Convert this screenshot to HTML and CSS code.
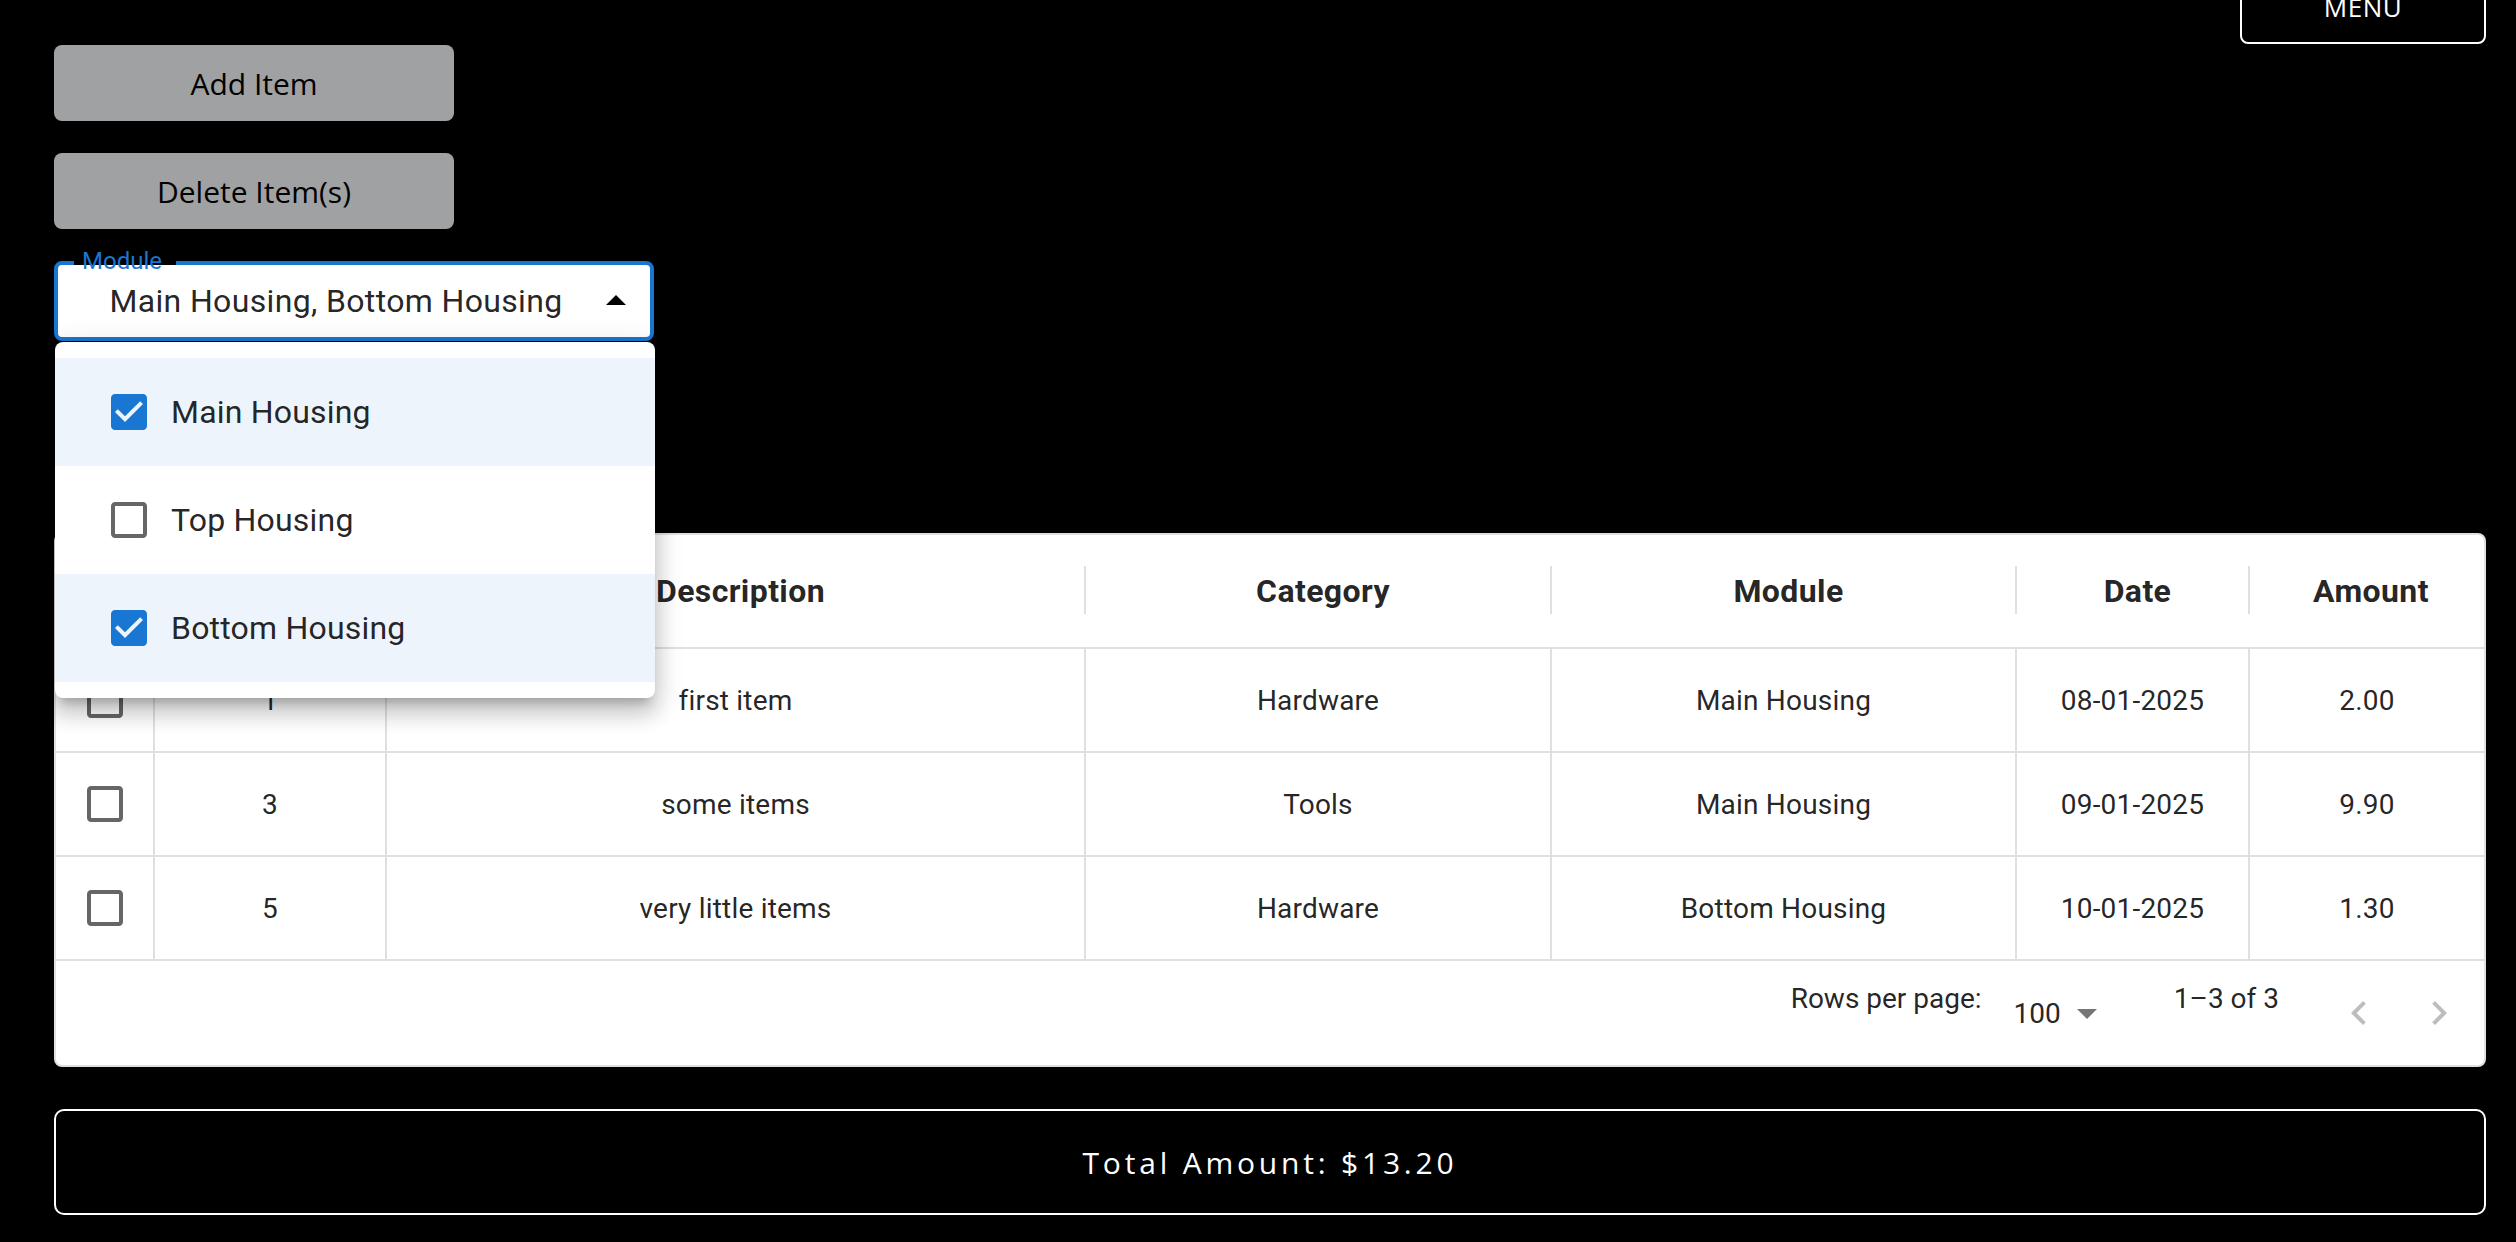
FILE: index.html
```html
<!DOCTYPE html>
<html lang="en">
<head>
<meta charset="utf-8">
<title>Items</title>
<link rel="stylesheet" href="styles.css">
</head>
<body>
<div class="page">
  <header class="topbar">
    <button class="menu-btn">MENU</button>
  </header>

  <div class="controls">
    <button class="btn">Add Item</button>
    <button class="btn">Delete Item(s)</button>

    <div class="select-wrap">
      <div class="select">
        <span class="select-value">Main Housing, Bottom Housing</span>
        <svg class="select-icon" viewBox="0 0 24 24"><path d="M7 14l5-5 5 5z"/></svg>
      </div>
      <span class="select-label">Module</span>

      <div class="menu">
        <div class="menu-item selected">
          <span class="cb"><svg class="checked" viewBox="0 0 24 24"><path d="M19 3H5c-1.11 0-2 .9-2 2v14c0 1.1.89 2 2 2h14c1.11 0 2-.9 2-2V5c0-1.1-.89-2-2-2zm-9 14l-5-5 1.41-1.41L10 14.17l7.59-7.59L19 8l-9 9z"/></svg></span>
          <span>Main Housing</span>
        </div>
        <div class="menu-item">
          <span class="cb"><svg class="unchecked" viewBox="0 0 24 24"><path d="M19 5v14H5V5h14m0-2H5c-1.1 0-2 .9-2 2v14c0 1.1.9 2 2 2h14c1.1 0 2-.9 2-2V5c0-1.1-.9-2-2-2z"/></svg></span>
          <span>Top Housing</span>
        </div>
        <div class="menu-item selected">
          <span class="cb"><svg class="checked" viewBox="0 0 24 24"><path d="M19 3H5c-1.11 0-2 .9-2 2v14c0 1.1.89 2 2 2h14c1.11 0 2-.9 2-2V5c0-1.1-.89-2-2-2zm-9 14l-5-5 1.41-1.41L10 14.17l7.59-7.59L19 8l-9 9z"/></svg></span>
          <span>Bottom Housing</span>
        </div>
      </div>
    </div>
  </div>

  <div class="grid">
    <div class="row head">
      <div class="hcell"><svg class="unchecked cbi" viewBox="0 0 24 24"><path d="M19 5v14H5V5h14m0-2H5c-1.1 0-2 .9-2 2v14c0 1.1.9 2 2 2h14c1.1 0 2-.9 2-2V5c0-1.1-.9-2-2-2z"/></svg></div>
      <div class="hcell">ID</div>
      <div class="hcell">Description</div>
      <div class="hcell">Category</div>
      <div class="hcell">Module</div>
      <div class="hcell">Date</div>
      <div class="hcell last">Amount</div>
    </div>

    <div class="row body-row">
      <div class="cell"><svg class="unchecked cbi" viewBox="0 0 24 24"><path d="M19 5v14H5V5h14m0-2H5c-1.1 0-2 .9-2 2v14c0 1.1.9 2 2 2h14c1.1 0 2-.9 2-2V5c0-1.1-.9-2-2-2z"/></svg></div>
      <div class="cell">1</div>
      <div class="cell">first item</div>
      <div class="cell">Hardware</div>
      <div class="cell">Main Housing</div>
      <div class="cell">08-01-2025</div>
      <div class="cell">2.00</div>
    </div>

    <div class="row body-row">
      <div class="cell"><svg class="unchecked cbi" viewBox="0 0 24 24"><path d="M19 5v14H5V5h14m0-2H5c-1.1 0-2 .9-2 2v14c0 1.1.9 2 2 2h14c1.1 0 2-.9 2-2V5c0-1.1-.9-2-2-2z"/></svg></div>
      <div class="cell">3</div>
      <div class="cell">some items</div>
      <div class="cell">Tools</div>
      <div class="cell">Main Housing</div>
      <div class="cell">09-01-2025</div>
      <div class="cell">9.90</div>
    </div>

    <div class="row body-row">
      <div class="cell"><svg class="unchecked cbi" viewBox="0 0 24 24"><path d="M19 5v14H5V5h14m0-2H5c-1.1 0-2 .9-2 2v14c0 1.1.9 2 2 2h14c1.1 0 2-.9 2-2V5c0-1.1-.9-2-2-2z"/></svg></div>
      <div class="cell">5</div>
      <div class="cell">very little items</div>
      <div class="cell">Hardware</div>
      <div class="cell">Bottom Housing</div>
      <div class="cell">10-01-2025</div>
      <div class="cell">1.30</div>
    </div>

    <div class="foot">
      <span class="lbl">Rows per page:</span>
      <span class="psel"><span>100</span><svg viewBox="0 0 24 24"><path d="M7 10l5 5 5-5z"/></svg></span>
      <span class="lbl">1–3 of 3</span>
      <span class="actions">
        <span class="ibtn"><svg viewBox="0 0 24 24"><path d="M15.41 7.41 14 6l-6 6 6 6 1.41-1.41L10.83 12z"/></svg></span>
        <span class="ibtn"><svg viewBox="0 0 24 24"><path d="M10 6 8.59 7.41 13.17 12l-4.58 4.59L10 18l6-6z"/></svg></span>
      </span>
    </div>
  </div>

  <div class="total">Total Amount: $13.20</div>
</div>
</body>
</html>
```

FILE: styles.css
```css
* { box-sizing: border-box; }

html, body {
  margin: 0;
  background: #000;
}

body {
  font-family: Roboto, "Liberation Sans", sans-serif;
  overflow: hidden;
}

.page {
  padding: 0 30px 0 54px;
}

.topbar {
  display: flex;
  justify-content: flex-end;
  margin-top: -30px;
  height: 74px;
}

.menu-btn {
  width: 246px;
  height: 74px;
  padding: 0;
  border: 2px solid #fff;
  border-radius: 8px;
  background: transparent;
  color: #fff;
  font-family: "Open Sans", sans-serif;
  font-size: 26px;
  letter-spacing: 0.5px;
}

.controls {
  display: flex;
  flex-direction: column;
  align-items: flex-start;
  gap: 32px;
  margin-top: 1px;
}

.btn {
  width: 400px;
  height: 76px;
  padding: 0;
  border: none;
  border-radius: 8px;
  background: #a0a1a3;
  color: #000;
  font-family: "Open Sans", sans-serif;
  font-size: 30px;
}

.select-wrap {
  position: relative;
  width: 600px;
  height: 80px;
}

.select {
  position: relative;
  height: 80px;
  border: 4px solid #1976d2;
  border-radius: 8px;
  background: #fff;
  display: flex;
  align-items: center;
  justify-content: center;
  padding: 0 60px 0 24px;
  font-size: 32px;
  letter-spacing: 0.35px;
  color: rgba(0, 0, 0, 0.87);
  white-space: nowrap;
}

.select-icon {
  position: absolute;
  right: 10px;
  top: 12px;
  width: 48px;
  height: 48px;
  fill: #000;
}

.select-label {
  position: absolute;
  left: 20px;
  top: -12px;
  padding: 0 14px 0 8px;
  font-size: 24px;
  line-height: 24px;
  color: #1976d2;
  z-index: 1;
}

.select-label::before {
  content: "";
  position: absolute;
  left: 0;
  right: 0;
  top: 12px;
  height: 4px;
  background: #000;
  z-index: -1;
}

.menu {
  position: absolute;
  top: 81px;
  left: 1px;
  width: 600px;
  padding: 16px 0;
  background: #fff;
  border-radius: 8px;
  z-index: 10;
  box-shadow: 0 10px 10px -6px rgba(0, 0, 0, 0.2),
              0 16px 20px 2px rgba(0, 0, 0, 0.14),
              0 6px 28px 4px rgba(0, 0, 0, 0.12);
}

.menu-item {
  height: 108px;
  display: flex;
  align-items: center;
  padding-left: 32px;
  font-size: 32px;
  letter-spacing: 0.2px;
  color: rgba(0, 0, 0, 0.87);
}

.menu-item.selected {
  background: rgba(25, 118, 210, 0.08);
}

.cb {
  width: 84px;
  height: 84px;
  display: flex;
  align-items: center;
  justify-content: center;
}

.cb svg, .cbi {
  width: 48px;
  height: 48px;
}

.checked { fill: #1976d2; }
.unchecked { fill: rgba(0, 0, 0, 0.6); }

.grid {
  margin-top: 192px;
  background: #fff;
  border: 2px solid #e0e0e0;
  border-radius: 8px;
  color: rgba(0, 0, 0, 0.87);
}

.row {
  display: grid;
  grid-template-columns: 99px 232px 699px 466px 465px 233px 234px;
}

.head {
  height: 114px;
  border-bottom: 2px solid #e0e0e0;
}

.hcell {
  position: relative;
  display: flex;
  align-items: center;
  justify-content: center;
  padding-left: 8px;
  font-size: 32px;
  font-weight: 700;
  letter-spacing: 0.4px;
}

.hcell::after {
  content: "";
  position: absolute;
  right: 0;
  top: 31px;
  width: 2px;
  height: 48px;
  background: #e0e0e0;
}

.hcell.last::after { display: none; }

.body-row {
  height: 104px;
  border-bottom: 2px solid #e0e0e0;
}

.cell {
  display: flex;
  align-items: center;
  justify-content: center;
  font-size: 28px;
  letter-spacing: 0.2px;
  border-right: 2px solid #e0e0e0;
}

.cell:last-child { border-right: none; }

.foot {
  height: 104px;
  display: flex;
  align-items: center;
  justify-content: flex-end;
  padding-right: 5px;
  font-size: 28px;
}

.lbl {
  margin-bottom: 30px;
}

.psel {
  display: flex;
  align-items: center;
  margin-left: 16px;
  margin-right: 63px;
  padding-left: 16px;
}

.psel svg {
  width: 48px;
  height: 48px;
  margin-left: 2px;
  fill: rgba(0, 0, 0, 0.54);
}

.actions {
  display: flex;
  margin-left: 40px;
}

.ibtn {
  width: 80px;
  height: 80px;
  display: flex;
  align-items: center;
  justify-content: center;
}

.ibtn svg {
  width: 48px;
  height: 48px;
  fill: rgba(0, 0, 0, 0.26);
}

.total {
  margin-top: 42px;
  height: 106px;
  border: 2px solid #fff;
  border-radius: 10px;
  display: flex;
  align-items: center;
  justify-content: center;
  color: #fff;
  font-family: "Open Sans", sans-serif;
  font-size: 30px;
  letter-spacing: 3.8px;
}
```
